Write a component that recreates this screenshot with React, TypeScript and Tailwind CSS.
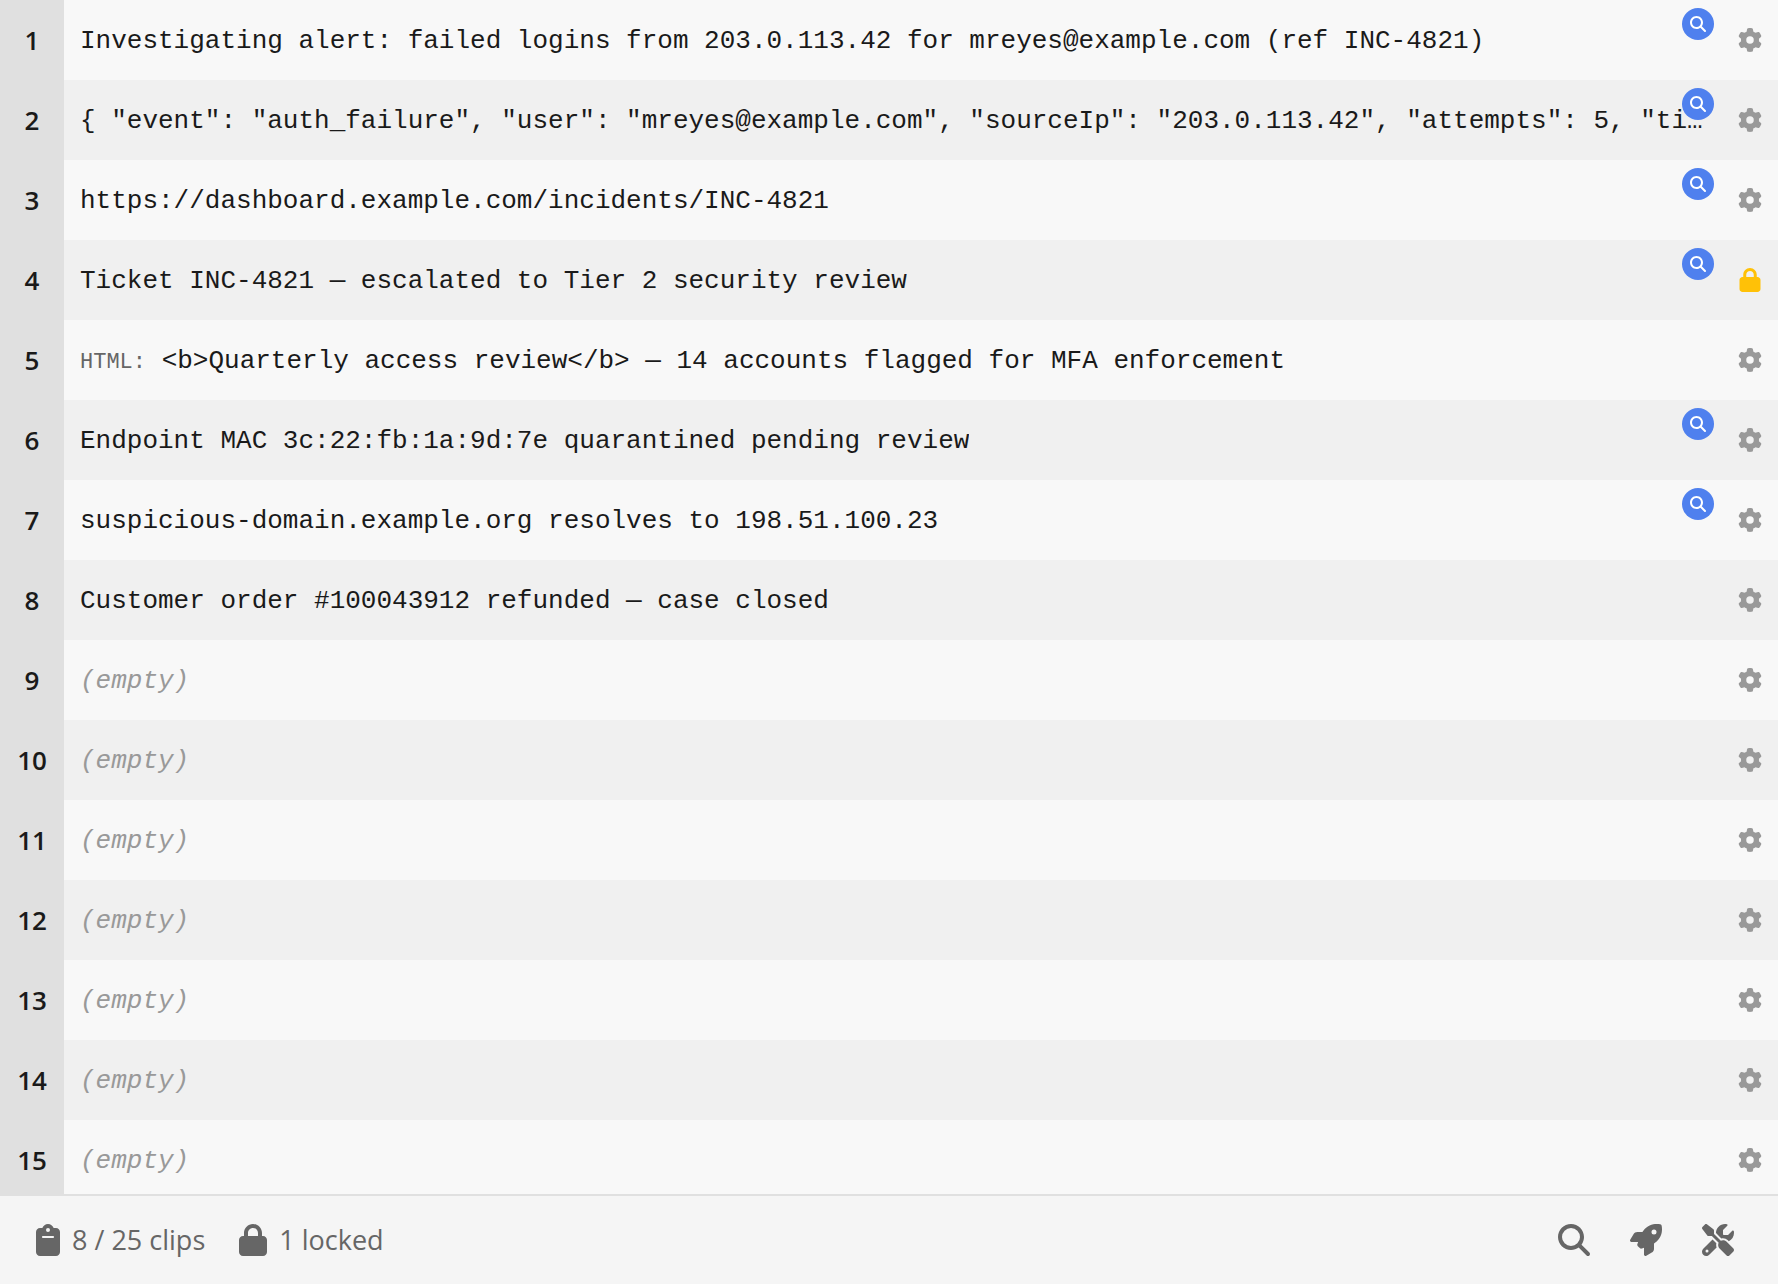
import { FaClipboard, FaGear, FaLock, FaMagnifyingGlass, FaRocket, FaScrewdriverWrench } from "react-icons/fa6";

interface Clip {
  text: string;
  prefix?: string;
  scan?: boolean;
  locked?: boolean;
}

const VISIBLE_ROWS = 15;
const MAX_CLIPS = 25;

const clips: Clip[] = [
  { text: "Investigating alert: failed logins from 203.0.113.42 for mreyes@example.com (ref INC-4821)", scan: true },
  {
    text: '{ "event": "auth_failure", "user": "mreyes@example.com", "sourceIp": "203.0.113.42", "attempts": 5, "ti…',
    scan: true,
  },
  { text: "https://dashboard.example.com/incidents/INC-4821", scan: true },
  { text: "Ticket INC-4821 — escalated to Tier 2 security review", scan: true, locked: true },
  { prefix: "HTML:", text: "<b>Quarterly access review</b> — 14 accounts flagged for MFA enforcement" },
  { text: "Endpoint MAC 3c:22:fb:1a:9d:7e quarantined pending review", scan: true },
  { text: "suspicious-domain.example.org resolves to 198.51.100.23", scan: true },
  { text: "Customer order #100043912 refunded — case closed" },
];

const footerActions = [
  { label: "Search", Icon: FaMagnifyingGlass },
  { label: "Quick tools", Icon: FaRocket },
  { label: "Settings", Icon: FaScrewdriverWrench },
];

function ClipRow({ index, clip }: { index: number; clip?: Clip }) {
  return (
    <li className="relative flex h-20 shrink-0 odd:bg-[#f8f8f8] even:bg-[#f0f0f0]">
      <div className="flex w-16 shrink-0 items-center justify-center bg-[#e0e0e0] font-['Open_Sans',sans-serif] text-[26px] font-semibold">
        {index}
      </div>

      <div className="flex min-w-0 flex-1 items-center pt-0.5 pl-4 font-['Liberation_Mono',monospace] text-[26px]">
        {clip ? (
          <p className="truncate">
            {clip.prefix && (
              <>
                <span className="text-[22px] text-[#666666]">{clip.prefix}</span>{" "}
              </>
            )}
            {clip.text}
          </p>
        ) : (
          <p className="text-[#999999] italic">(empty)</p>
        )}
      </div>

      {/* Scan badge */}
      {clip?.scan && (
        <button
          type="button"
          aria-label={`Scan clip ${index}`}
          className="absolute top-2 right-16 flex size-8 items-center justify-center rounded-full bg-[#4f80ee] text-white"
        >
          <FaMagnifyingGlass size={16} />
        </button>
      )}

      <button
        type="button"
        aria-label={clip?.locked ? `Unlock clip ${index}` : `Clip ${index} options`}
        className="flex w-16 shrink-0 items-center justify-end pr-4 text-[#999999]"
      >
        {clip?.locked ? <FaLock size={24} className="text-[#ffc107]" /> : <FaGear size={24} />}
      </button>
    </li>
  );
}

export default function App() {
  const lockedCount = clips.filter((c) => c.locked).length;

  return (
    <div className="flex h-screen flex-col bg-[#f5f5f5] text-[#1a1a1a]">
      <ul className="flex min-h-0 flex-1 flex-col overflow-hidden">
        {Array.from({ length: VISIBLE_ROWS }, (_, i) => (
          <ClipRow key={i} index={i + 1} clip={clips[i]} />
        ))}
      </ul>

      {/* Status bar */}
      <footer className="flex shrink-0 items-center justify-between border-t-2 border-[#e0e0e0] py-6 pr-11 pl-9 font-['Open_Sans',sans-serif] text-[27px] leading-10 text-[#666666]">
        <div className="flex items-center gap-[34px]">
          <div className="flex items-center gap-3">
            <FaClipboard size={32} className="w-6" />
            <span>
              {clips.length} / {MAX_CLIPS} clips
            </span>
          </div>
          <div className="flex items-center gap-3">
            <FaLock size={32} className="w-7" />
            <span>{lockedCount} locked</span>
          </div>
        </div>
        <div className="flex items-center gap-10">
          {footerActions.map(({ label, Icon }) => (
            <button key={label} type="button" aria-label={label}>
              <Icon size={32} />
            </button>
          ))}
        </div>
      </footer>
    </div>
  );
}
